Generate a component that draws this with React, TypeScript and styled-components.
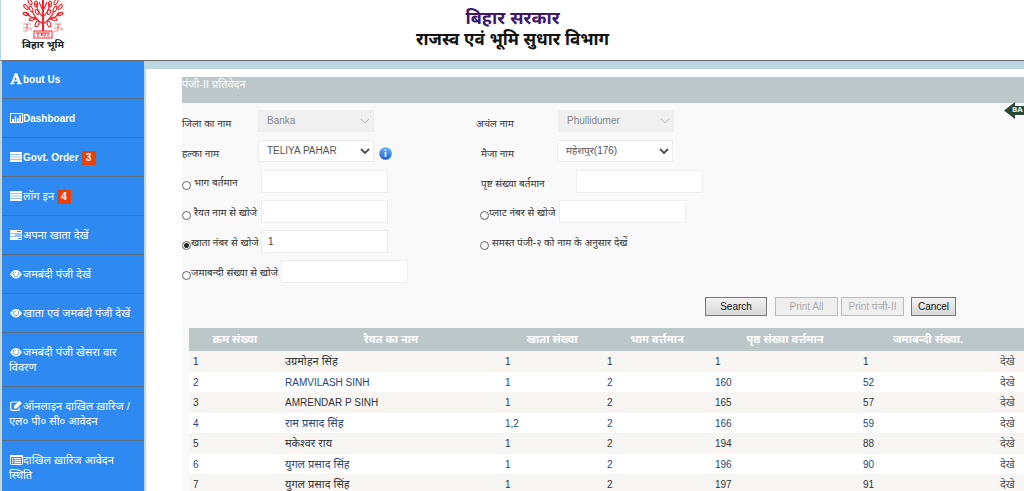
import React from 'react';
import styled, { createGlobalStyle } from 'styled-components';

const GlobalStyle = createGlobalStyle`
  *, *::before, *::after { box-sizing: border-box; }
  body {
    margin: 0;
    background: #fff;
    color: #333;
    font-family: 'Liberation Sans', 'Noto Sans', sans-serif;
    font-size: 10px;
    line-height: 15px;
    overflow-x: hidden;
  }
`;

const Page = styled.div`
  display: flex;
  flex-direction: column;
  height: 100vh;
  overflow: hidden;
`;

const Header = styled.header`
  display: grid;
  grid-template-columns: 84px 1fr 84px;
  flex: none;
  height: 61px;
  background: #fff;
  border-left: 1px solid #bcd7e0;
  border-bottom: 1px solid #686c70;
`;

const Logo = styled.div`
  display: flex;
  flex-direction: column;
  align-items: center;
  color: #222;
  font-size: 10px;
  font-weight: 700;
  line-height: 12px;
  white-space: nowrap;
`;

const Titles = styled.div`
  display: flex;
  flex-direction: column;
  align-items: center;
  padding-top: 8px;
`;

const State = styled.h1`
  margin: 0;
  color: #3c1770;
  font-size: 18px;
  line-height: 21px;
`;

const Department = styled.h2`
  margin: 0;
  color: #111;
  font-size: 17px;
  line-height: 21px;
`;

const Body = styled.div`
  display: flex;
  flex: 1;
  min-height: 0;
`;

const Sidebar = styled.nav`
  flex: none;
  width: 146px;
  background: #2e8af0;
  border-left: 2px solid #bcd7e0;
  border-right: 2px solid #bcd7e0;
  overflow: hidden;
`;

const MenuList = styled.ul`
  margin: 0;
  padding: 0;
  list-style: none;
`;

const MenuLink = styled.a<{ $latin?: boolean }>`
  display: block;
  padding: 12px 8px 11px 7px;
  border-bottom: 1px solid #5f7080;
  color: #fff;
  font-size: ${(p) => (p.$latin ? 10 : 11)}px;
  font-weight: ${(p) => (p.$latin ? 700 : 400)};
  line-height: 15px;
  text-decoration: none;

  li:first-child > & { padding-top: 11px; }

  svg { vertical-align: -1px; margin-left: 1px; overflow: visible; }
`;

const Badge = styled.span`
  display: inline-block;
  width: 14px;
  margin-left: 3px;
  background: #e8420c;
  font-size: 10px;
  font-weight: 700;
  line-height: 14px;
  text-align: center;
`;

const Main = styled.main`
  position: relative;
  flex: 1;
  min-width: 0;
  padding: 8px 0 0 36px;
  border-top: 8px solid #bcd7e0;
`;

const Panel = styled.section`
  height: 100%;
  background: #f9f9f9;
`;

const PanelTitle = styled.h3`
  height: 26px;
  margin: 0;
  background: #bcc7c9;
  color: #fff;
  font-size: 11px;
  font-weight: 400;
  line-height: 15px;
`;

const BackLink = styled.a`
  position: absolute;
  top: 33px;
  right: 0;
  width: 20px;
  height: 17px;
  color: #e4ece4;
  font-family: 'DejaVu Sans', sans-serif;
  font-size: 7px;
  font-weight: 700;
  line-height: 17px;
  text-decoration: none;
  white-space: nowrap;
  padding-left: 8px;

  svg { position: absolute; top: 0; left: 0; }
  span { position: relative; }
`;

const Form = styled.form`
  display: grid;
  grid-template-columns: 294px 1fr;
  grid-auto-rows: 30px;
  padding-top: 3px;
`;

const Field = styled.div<{ $indent?: number }>`
  display: flex;
  align-items: center;
  padding-left: ${(p) => p.$indent ?? 0}px;
`;

const Label = styled.label<{ $width: number }>`
  flex: none;
  width: ${(p) => p.$width}px;
  padding-top: 4px;
  color: #333;
  white-space: nowrap;
`;

const RadioLabel = styled(Label)<{ $gap?: number }>`
  padding-top: 2px;
  padding-left: ${(p) => p.$gap ?? 0}px;
`;

const Radio = styled.input`
  appearance: none;
  flex: none;
  width: 9px;
  height: 9px;
  margin: 8px 0 0;
  border: 1px solid #666;
  border-radius: 50%;
  background: #fff;

  &:checked { background: radial-gradient(circle, #222 0 2px, #fff 3px); }
`;

const TextInput = styled.input`
  width: 127px;
  height: 23px;
  padding: 0 6px;
  border: 1px solid #eee;
  background: #fff;
  color: #444;
  font: 10px 'Liberation Sans', sans-serif;
`;

const SelectBox = styled.div`
  position: relative;
  width: 116px;
  height: 22px;

  svg { position: absolute; top: 8px; right: 4px; pointer-events: none; }
`;

const Select = styled.select`
  appearance: none;
  width: 100%;
  height: 100%;
  padding: 0 18px 1px 8px;
  border: 1px solid #eee;
  border-radius: 0;
  background: #fff;
  color: #555;
  font: 10px 'Liberation Sans', 'Noto Sans', sans-serif;

  &:disabled { background: #f0f0f0; color: #888; opacity: 1; }
`;

const InfoIcon = styled.svg`
  margin: 5px 0 0 5px;
`;

const Actions = styled.div`
  display: flex;
  justify-content: flex-end;
  padding: 11px 68px 12px 0;
`;

const Button = styled.button<{ $width: number; $gap?: number }>`
  width: ${(p) => p.$width}px;
  height: 19px;
  margin-left: ${(p) => p.$gap ?? 0}px;
  padding: 0;
  border: 1px solid #777;
  border-radius: 0;
  background: linear-gradient(#f2f2f2, #d8d8d8);
  color: #111;
  font: 10px/15px 'Liberation Sans', 'Noto Sans', sans-serif;
  white-space: nowrap;

  &:disabled { border-color: #bbb; background: #efefef; color: #aaa; }
`;

const TableWrap = styled.div`
  padding-left: 7px;
`;

const Table = styled.table`
  width: 100%;
  table-layout: fixed;
  border-collapse: collapse;

  th {
    height: 23px;
    padding: 0;
    background: #bcc7c9;
    color: #fff;
    font-size: 11px;
    font-weight: 700;
    line-height: 15px;
    text-align: center;
  }

  td {
    height: 21px;
    padding: 0 0 0 4px;
    background: #f7f6f3;
    color: #333;
    line-height: 15px;
    white-space: nowrap;
  }

  td:lang(hi) { font-size: 11px; }
  td:last-child { padding-left: 3px; }

  tbody tr:nth-child(even) td {
    height: 20px;
    background: #fff;
    color: #284775;
  }

  a, tbody tr:nth-child(even) td a { color: #555; text-decoration: none; }
`;

const icons: Record<string, React.ReactNode> = {
  font: (
    <path
      fill="#fff"
      stroke="#fff"
      strokeWidth=".5"
      fillRule="evenodd"
      d="M5 -.5h2l3.600 9.700 1.200.3v.5H7v-.5l1.200-.3-.7-2H3.600l-.7 2 1.300.3v.5H0v-.5l1.200-.3zM5.500 2.200L4 6.400h3.100z"
    />
  ),
  chart: (
    <>
      <rect x=".5" y=".5" width="12" height="9" fill="none" stroke="#fff" />
      <path fill="#fff" d="M2 6h2v3H2zM4.700 3.500h1.600V9H4.700zM7 5h1.600v4H7zM9.300 2H11v7H9.300z" />
    </>
  ),
  lines: <path fill="#fff" d="M0 0h12v2.200H0zM0 2.700h12v2.100H0zM0 5.300h12v2.100H0zM0 7.900h12V10H0z" />,
  tasks: (
    <>
      <path fill="#fff" d="M0 0h12v2.900H0zM0 3.500h12v2.900H0zM0 7h12v2.900H0z" />
      <path fill="#2e8af0" d="M7 1h4v.9H7zM5 4.500h6v.9H5zM8 8h3v.9H8z" />
    </>
  ),
  eye: (
    <>
      <path fill="#fff" d="M0 5.300Q2.800 1 6 1T12 5.300Q9.200 9.500 6 9.500T0 5.300z" />
      <path d="M3.600 3Q2.500 5.200 4 6.900Q6 8.600 8 6.900Q9.500 5.200 8.400 3" fill="none" stroke="#2e8af0" strokeWidth=".7" />
      <path d="M4.700 4.700Q4.800 3.400 6 3.300" fill="none" stroke="#2e8af0" strokeWidth=".6" />
    </>
  ),
  edit: (
    <>
      <path d="M7.500 1H2Q.7 1 .7 2.300V8Q.7 9.300 2 9.300H8Q9.300 9.300 9.300 8V6.500" fill="none" stroke="#fff" strokeWidth="1.200" />
      <path d="M4 7.500V5L9.200-.2 11.800 2.200 6.500 7.500z" fill="#fff" />
    </>
  ),
  list: (
    <>
      <rect x=".5" y=".5" width="12" height="9" rx="1" fill="none" stroke="#fff" />
      <path fill="#fff" d="M0 0h13v2H0zM2 3h1.300v1.300H2zM4.200 3H11v1.300H4.200zM2 5h1.300v1.300H2zM4.200 5H11v1.300H4.200zM2 7h1.300v1.300H2zM4.200 7H11v1.300H4.200z" />
    </>
  ),
};

const menu = [
  { icon: 'font', text: 'bout Us', latin: true },
  { icon: 'chart', text: 'Dashboard', latin: true },
  { icon: 'lines', text: 'Govt. Order', badge: 3, latin: true },
  { icon: 'lines', text: 'लॉग इन', badge: 4 },
  { icon: 'tasks', text: 'अपना खाता देखें' },
  { icon: 'eye', text: 'जमबंदी पंजी देखें' },
  { icon: 'eye', text: 'खाता एवं जमबंदी पंजी देखें' },
  { icon: 'eye', text: 'जमबंदी पंजी खेसरा वार विवरण' },
  { icon: 'edit', text: 'ऑनलाइन दाखिल ख़ारिज / एल० पी० सी० आवेदन' },
  { icon: 'list', text: 'दाखिल ख़ारिज आवेदन स्थिति' },
];

const columns = [
  { title: 'क्रम संख्या', width: 92 },
  { title: 'रैयत का नाम', width: 220 },
  { title: 'खाता संख्या', width: 102 },
  { title: 'भाग वर्त्तमान', width: 108 },
  { title: 'पृष्ठ संख्या वर्त्तमान', width: 148 },
  { title: 'जमाबन्दी संख्या.', width: 138 },
  { title: '', width: 27 },
];

const rows = [
  ['1', 'उग्रमोहन सिंह', '1', '1', '1', '1'],
  ['2', 'RAMVILASH SINH', '1', '2', '160', '52'],
  ['3', 'AMRENDAR P SINH', '1', '2', '165', '57'],
  ['4', 'राम प्रसाद सिंह', '1,2', '2', '166', '59'],
  ['5', 'मकेश्वर राय', '1', '2', '194', '88'],
  ['6', 'युगल प्रसाद सिंह', '1', '2', '196', '90'],
  ['7', 'युगल प्रसाद सिंह', '1', '2', '197', '91'],
];

const langOf = (text: string) => (/[\u0900-\u097f]/.test(text) ? 'hi' : 'en');

function TreeLogo() {
  return (
    <svg width="42" height="39" viewBox="0 0 42 39" fill="none" stroke="#f0262c" aria-hidden="true">
      <path strokeWidth="2" d="M21 31V0" />
      <path strokeWidth="1.200" d="M21 24Q14 20 10 11M21 24Q28 20 32 11M21 17Q16 13 14 3M21 17Q26 13 28 3M21 11l-4-9M21 11l4-9M16 20Q9 18 4 13M26 20Q33 18 38 13" />
      <g strokeWidth="1.100">
        <ellipse cx="4" cy="7" rx="1.500" ry="3" transform="rotate(-40 4 7)" />
        <ellipse cx="38" cy="7" rx="1.500" ry="3" transform="rotate(40 38 7)" />
        <ellipse cx="4" cy="14" rx="3" ry="1.400" transform="rotate(15 4 14)" />
        <ellipse cx="38" cy="14" rx="3" ry="1.400" transform="rotate(-15 38 14)" />
        <ellipse cx="9" cy="9" rx="1.500" ry="3" transform="rotate(-25 9 9)" />
        <ellipse cx="33" cy="9" rx="1.500" ry="3" transform="rotate(25 33 9)" />
        <ellipse cx="8" cy="2" rx="1.500" ry="3" transform="rotate(-30 8 2)" />
        <ellipse cx="34" cy="2" rx="1.500" ry="3" transform="rotate(30 34 2)" />
        <ellipse cx="14" cy="4" rx="1.500" ry="3" />
        <ellipse cx="28" cy="4" rx="1.500" ry="3" />
        <ellipse cx="10" cy="19" rx="3" ry="1.400" transform="rotate(-20 10 19)" />
        <ellipse cx="32" cy="19" rx="3" ry="1.400" transform="rotate(20 32 19)" />
        <ellipse cx="15" cy="24" rx="1.700" ry="3" transform="rotate(20 15 24)" />
        <ellipse cx="27" cy="24" rx="1.700" ry="3" transform="rotate(-20 27 24)" />
        <ellipse cx="15" cy="12" rx="1.500" ry="2.600" transform="rotate(-25 15 12)" />
        <ellipse cx="27" cy="12" rx="1.500" ry="2.600" transform="rotate(25 27 12)" />
      </g>
      <rect x="12" y="31" width="18" height="7" strokeWidth="1" />
      <path strokeWidth="1" d="M14 33h14M16 33v4M19 35h3M23 33v4M26 33v4M20 33l-1 3" />
      <path strokeWidth="1" opacity=".5" d="M1 24h4v4h4M5 24v7H1M9 24H5M1 28h4M9 28v3M32 24h4v4h4M36 24v7h-4M40 24h-4M32 28h4M40 28v3" />
    </svg>
  );
}

function DropDown({ id, value, disabled }: { id: string; value: string; disabled?: boolean }) {
  return (
    <SelectBox>
      <Select id={id} disabled={disabled} defaultValue={value}>
        <option>{value}</option>
      </Select>
      <svg width="10" height="6" viewBox="0 0 10 6" aria-hidden="true">
        <path d="M1 1l4 4 4-4" fill="none" stroke={disabled ? '#bbb' : '#555'} strokeWidth={disabled ? 1 : 2} />
      </svg>
    </SelectBox>
  );
}

function RadioField(props: { id: string; text: string; width: number; gap?: number; indent?: number; checked?: boolean; value?: string; input?: boolean }) {
  const { id, text, width, gap, indent, checked, value, input = true } = props;
  return (
    <Field $indent={indent}>
      <Radio type="radio" name="search" id={id} defaultChecked={checked} />
      <RadioLabel htmlFor={id} $width={width} $gap={gap}>{text}</RadioLabel>
      {input && <TextInput type="text" aria-label={text} defaultValue={value} />}
    </Field>
  );
}

export default function App() {
  return (
    <Page>
      <GlobalStyle />
      <Header>
        <Logo>
          <TreeLogo />
          बिहार भूमि
        </Logo>
        <Titles>
          <State>बिहार सरकार</State>
          <Department>राजस्व एवं भूमि सुधार विभाग</Department>
        </Titles>
      </Header>
      <Body>
        <Sidebar>
          <MenuList>
            {menu.map((item) => (
              <li key={item.text}>
                <MenuLink href="#" $latin={item.latin}>
                  <svg width="13" height="10" viewBox="0 0 13 10" aria-hidden="true">{icons[item.icon]}</svg>
                  {item.text}
                  {item.badge && <Badge>{item.badge}</Badge>}
                </MenuLink>
              </li>
            ))}
          </MenuList>
        </Sidebar>
        <Main>
          <Panel>
            <PanelTitle>पंजी-II प्रतिवेदन</PanelTitle>
            <Form onSubmit={(e) => e.preventDefault()}>
              <Field>
                <Label htmlFor="district" $width={76}>जिला का नाम</Label>
                <DropDown id="district" value="Banka" disabled />
              </Field>
              <Field>
                <Label htmlFor="circle" $width={82}>अचंल नाम</Label>
                <DropDown id="circle" value="Phullidumer" disabled />
              </Field>
              <Field>
                <Label htmlFor="halka" $width={76}>हल्का नाम</Label>
                <DropDown id="halka" value="TELIYA PAHAR" />
                <InfoIcon width="13" height="13" viewBox="0 0 13 13" aria-hidden="true">
                  <defs>
                    <linearGradient id="info" x1="0" y1="0" x2="0" y2="1">
                      <stop offset="0" stopColor="#6db4f5" />
                      <stop offset="1" stopColor="#1c5fd6" />
                    </linearGradient>
                  </defs>
                  <circle cx="6.500" cy="6.500" r="6.300" fill="url(#info)" />
                  <path d="M5.700 2.600h1.600v1.400H5.700zM5.700 5h1.600v5H5.700z" fill="#fff" />
                </InfoIcon>
              </Field>
              <Field $indent={5}>
                <Label htmlFor="mauza" $width={76}>मैजा नाम</Label>
                <DropDown id="mauza" value="महेशपुर(176)" />
              </Field>
              <RadioField id="part" text="भाग बर्तमान" width={70} gap={3} />
              <Field $indent={5}>
                <Label htmlFor="page" $width={95}>पृष्ट संख्या बर्तमान</Label>
                <TextInput id="page" type="text" />
              </Field>
              <RadioField id="name" text="रैयत नाम से खोजे" width={70} gap={3} />
              <RadioField id="plot" text="प्लाट नंबर से खोजे" width={70} indent={4} />
              <RadioField id="account" text="खाता नंबर से खोजे" width={70} checked value="1" />
              <RadioField id="all" text="समस्त पंजी-२ को नाम के अनुसार देखें" width={150} gap={3} indent={4} input={false} />
              <RadioField id="jamabandi" text="जमाबन्दी संख्या से खोजे" width={90} />
            </Form>
            <Actions>
              <Button type="button" $width={62}>Search</Button>
              <Button type="button" $width={63} $gap={8} disabled>Print All</Button>
              <Button type="button" $width={63} $gap={3} disabled>Print पंजी-II</Button>
              <Button type="button" $width={45} $gap={7}>Cancel</Button>
            </Actions>
            <TableWrap>
              <Table>
                <colgroup>
                  {columns.map((c) => <col key={c.title} width={c.width} />)}
                </colgroup>
                <thead>
                  <tr>{columns.map((c) => <th key={c.title} scope="col">{c.title}</th>)}</tr>
                </thead>
                <tbody>
                  {rows.map((r) => (
                    <tr key={r[0]}>
                      {r.map((cell, i) => <td key={i} lang={langOf(cell)}>{cell}</td>)}
                      <td lang="hi"><a href="#">देखे</a></td>
                    </tr>
                  ))}
                </tbody>
              </Table>
            </TableWrap>
          </Panel>
          <BackLink href="#" aria-label="Back">
            <svg width="20" height="17" viewBox="0 0 20 17" aria-hidden="true">
              <path d="M0 8.500L11 0V4H20V13H11V17z" fill="#2a4a38" />
            </svg>
            <span>BA</span>
          </BackLink>
        </Main>
      </Body>
    </Page>
  );
}
